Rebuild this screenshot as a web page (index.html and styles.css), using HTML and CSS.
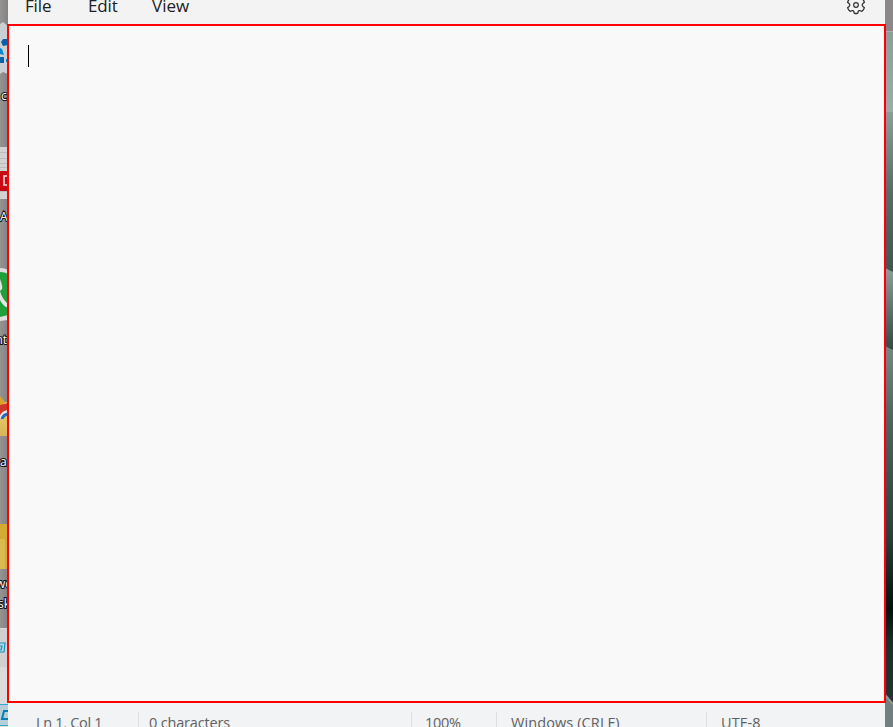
FILE: index.html
```
<!DOCTYPE html>
<html lang="en">
<head>
<meta charset="utf-8">
<title>Notepad</title>
<link rel="stylesheet" href="styles.css">
</head>
<body>
<div class="desktop">
  <svg class="wall" width="8" height="727" viewBox="0 0 8 727">
    <defs>
      <linearGradient id="shade"><stop offset="0" stop-color="#969393"/><stop offset="1" stop-color="#858282"/></linearGradient>
      <linearGradient id="gold" x2="0" y2="1"><stop offset="0" stop-color="#f0d174"/><stop offset="1" stop-color="#d8b657"/></linearGradient>
    </defs>
    <rect width="8" height="727" fill="url(#shade)"/>
    <path d="M0 24L3 22L8 26V74L3 72L0 74Z" fill="#c9d0d3"/>
    <path d="M1 42L3 39H8V45L3 46Z M0 57H4V63H0Z" fill="#075fa9"/>
    <path d="M0 48L2 49L4 55L0 54Z M6 59H8V62H6Z" fill="#0786d2"/>
    <rect y="147" width="8" height="52" fill="#d3d2d2"/>
    <path d="M0 152.500H8M0 158.500H8M0 163.500H8M0 167.500H8M0 191.500H8" stroke="#bdbdbd"/>
    <rect y="171" width="8" height="20" fill="#c70916"/>
    <path d="M8 176H4V185H8" fill="none" stroke="#eee4e4" stroke-width="1.500"/>
    <path d="M0 268Q5 268 8 270V320L0 321Z" fill="#dddede"/>
    <path d="M0 272Q5 272 8 274V315L0 317Z" fill="#20a03b"/>
    <path d="M0 279Q3 287 2 289L0 291Q2 299 8 304V308Q2 305 0 300Z" fill="#e5e5e5"/>
    <path d="M0 396L5 402H8V436H0Z" fill="#d5a52f"/>
    <path d="M0 408Q4 402 8 402V436H0Z" fill="url(#gold)"/>
    <path d="M0 405L8 403V410L0 417Z" fill="#cd382b"/>
    <path d="M1 419Q2 413 8 412" fill="none" stroke="#e6e7ed" stroke-width="4"/>
    <path d="M2 419Q3 415 8 414" fill="none" stroke="#2669bf" stroke-width="3"/>
    <rect y="524" width="8" height="45" fill="#d4ab32"/>
    <path d="M0 539H4Q5 539 5 541V569H0Z" fill="#dabb52"/>
    <rect y="628" width="8" height="99" fill="#dbdbdb"/>
    <rect y="629" width="8" height="38" fill="#d0d0d0"/>
    <path d="M0 643H5L4 652H0M0 646H2L1 650H0" fill="#b7d9e4" stroke="#168fb9" stroke-width="1.200"/>
    <rect y="704" width="8" height="22" fill="#b5cfd9"/>
    <path d="M0 704.500H8M0 725.500H8" stroke="#36a6cf"/>
    <path d="M8 711H4L2 719H8" fill="none" stroke="#087eb2" stroke-width="2"/>
    <g class="labels"><text x="1" y="100">c</text><text x="0" y="221">A</text><text x="-4.500" y="344">nt</text><text x="0" y="466">a</text><text x="-4" y="588">wo</text><text x="-2" y="608">sk</text></g>
  </svg>
  <main class="window">
    <nav class="menu">
      <span class="file">File</span><span class="edit">Edit</span><span class="view">View</span>
      <svg class="gear" width="20" height="20" viewBox="-10 -10 20 20">
        <path d="M-1.700-8.300Q0-8.700 1.700-8.300L2.200-6.200Q2.800-5.400 3.800-5.700L6-6.300Q7.900-4.800 8.400-2.700L6.700-1.200Q5.700 0 6.700 1.200L8.400 2.700Q7.900 4.800 6 6.300L3.800 5.700Q2.600 5.500 2.200 6.500L1.700 8.300Q0 8.700-1.700 8.300L-2.200 6.500Q-2.600 5.500-3.800 5.700L-6 6.300Q-7.900 4.800-8.400 2.700L-6.700 1.200Q-5.700 0-6.700-1.200L-8.400-2.700Q-7.900-4.800-6-6.300L-3.800-5.700Q-2.600-5.500-2.200-6.500Z"/>
        <circle r="2.300"/>
      </svg>
    </nav>
    <section class="editor"><div class="caret"></div></section>
    <footer class="status">
      <span class="position">Ln 1, Col 1</span><span class="count">0 characters</span><span class="scale">100%</span><span class="ending">Windows (CRLF)</span><span class="encoding">UTF-8</span>
    </footer>
  </main>
  <svg class="wall" width="8" height="727" viewBox="0 0 8 727">
    <defs>
      <linearGradient id="r1" x2="0" y2="1"><stop offset="0" stop-color="#909b9d"/><stop offset="1" stop-color="#a0aaac"/></linearGradient>
      <linearGradient id="r2" x2="0" y2="1"><stop offset="0" stop-color="#909b9e"/><stop offset=".5" stop-color="#5d686a"/><stop offset="1" stop-color="#465153"/></linearGradient>
      <linearGradient id="r3" x2="0" y2="1"><stop offset="0" stop-color="#929b9d"/><stop offset="1" stop-color="#384345"/></linearGradient>
      <linearGradient id="r4" x2="0" y2="1"><stop offset="0" stop-color="#7a8587"/><stop offset=".18" stop-color="#566264"/><stop offset=".5" stop-color="#303b3e"/><stop offset=".69" stop-color="#080e11"/><stop offset=".78" stop-color="#202b2e"/><stop offset="1" stop-color="#293537"/></linearGradient>
    </defs>
    <rect width="8" height="32" fill="#8c8788"/>
    <rect y="31" width="8" height="81" fill="url(#r1)"/>
    <path d="M0 31.500H8" stroke="#a5afb1"/>
    <rect y="112" width="8" height="162" fill="url(#r2)"/>
    <path d="M0 268L8 272V351L0 347Z" fill="url(#r3)"/>
    <path d="M0 346L8 350V727H0Z" fill="url(#r4)"/>
    <path d="M0 695L8 704V727H0Z" fill="#737e80"/>
    <path d="M0 695L8 704" stroke="#929b9d" stroke-width="2"/>
  </svg>
</div>
</body>
</html>
```
FILE: styles.css
```
* { box-sizing: border-box; }
body { margin: 0; overflow: hidden; font-family: "Open Sans", "Noto Sans", sans-serif; }
.desktop { display: flex; width: 893px; height: 727px; overflow: hidden; }
.wall { flex: 0 0 8px; display: block; overflow: hidden; }
.labels { font-size: 12px; fill: #fff; stroke: #111; stroke-width: 2px; paint-order: stroke; }
.window { width: 877px; height: 727px; flex: 0 0 877px; background: #f3f3f3; display: flex; flex-direction: column; }
.menu { height: 24px; flex: none; display: flex; align-items: flex-start; padding-left: 17px; color: #202020; font-size: 17px; line-height: 24px; }
.menu span { margin-top: -6px; white-space: nowrap; flex: none; }
.file { width: 63px; letter-spacing: -.15px; }
.edit { width: 64px; letter-spacing: -.15px; }
.view { letter-spacing: 0; }
.gear { margin: -5px 19px 0 auto; fill: none; stroke: #333; stroke-width: 1.25; }
.editor { width: 879px; height: 679px; flex: none; margin-left: -1px; border: 2px solid #f00; background: #f9f9f9; padding: 19px; z-index: 1; }
.caret { width: 1px; height: 22px; background: #000; }
.status { height: 24px; flex: none; background: #f1f3f5; color: #606162; display: flex; padding-top: 9px; overflow: hidden; font-size: 14.500px; line-height: 22px; }
.status span { height: 24px; flex: none; white-space: nowrap; }
.status span + span { border-left: 1px solid #dedfe0; }
.position { width: 130px; padding-left: 28px; letter-spacing: -.3px; }
.count { width: 273px; padding-left: 10px; letter-spacing: -.17px; }
.scale { width: 85px; padding-left: 13px; letter-spacing: -.3px; }
.ending { width: 210px; padding-left: 14px; letter-spacing: .1px; }
.encoding { width: 179px; padding-left: 14px; letter-spacing: .15px; }
```
